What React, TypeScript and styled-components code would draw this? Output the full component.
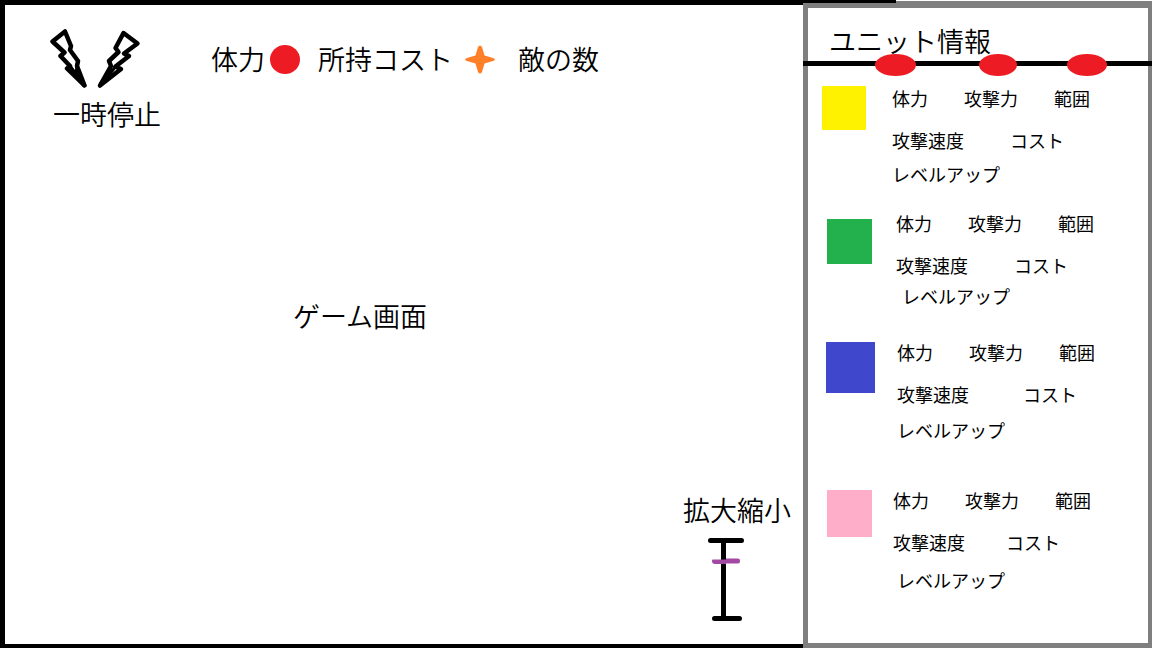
import React, { useState } from "react";
import styled, { createGlobalStyle } from "styled-components";

const GlobalStyle = createGlobalStyle`
  *, *::before, *::after { box-sizing: border-box; }
  body {
    margin: 0;
    background: #fff;
    color: #000;
    font-family: "Noto Sans CJK JP", sans-serif;
    font-weight: 350;
  }
  button {
    margin: 0;
    padding: 0;
    border: 0;
    background: none;
    color: inherit;
    font: inherit;
    cursor: pointer;
  }
`;

const Screen = styled.div`
  display: grid;
  grid-template-columns: minmax(0, 1fr) 349px;
  min-height: 100vh;
`;

const Game = styled.main`
  display: flex;
  flex-direction: column;
  border: solid #000;
  border-width: 5px 0 4px 5px;
`;

const Hud = styled.header`
  display: flex;
  align-items: flex-start;
  gap: 50px;
  padding: 24px 0 0 45px;
`;

const LargeText = styled.span`
  font-size: 27px;
  line-height: 36px;
  white-space: nowrap;
`;

const PauseButton = styled.button`
  display: flex;
  flex-direction: column;
  align-items: flex-start;
  gap: 7px;

  svg { display: block; }
  span { padding-left: 3px; }
`;

const Stats = styled.div`
  display: flex;
  align-items: center;
  padding-top: 12px;

  svg { display: block; flex: none; }
`;

const Stat = styled.div<{ $gap: number; $after?: number }>`
  display: flex;
  align-items: center;
  gap: ${(p) => p.$gap}px;
  margin-right: ${(p) => p.$after ?? 0}px;
`;

const Stage = styled.section`
  flex: 1;
  display: flex;
  align-items: center;
  justify-content: center;
  padding: 8px 88px 0 0;
`;

const ZoomControl = styled.label`
  align-self: flex-end;
  display: flex;
  flex-direction: column;
  align-items: center;
  gap: 10px;
  padding: 0 12px 23px 0;
`;

const ZoomTrack = styled.span`
  position: relative;
  display: block;
  margin-right: 22px;

  svg { display: block; }
`;

const ZoomInput = styled.input`
  position: absolute;
  inset: 5px 0;
  width: 36px;
  height: 73px;
  margin: 0;
  appearance: none;
  background: transparent;
  writing-mode: vertical-lr;
  direction: rtl;

  &::-webkit-slider-runnable-track {
    width: 36px;
    background: transparent;
  }

  &::-webkit-slider-thumb {
    appearance: none;
    width: 28px;
    height: 6px;
    margin-left: 4px;
    border-radius: 3px;
    background: #a349a4;
    clip-path: polygon(0 1px, 14px 1px, 14px 0, 100% 0, 100% 5px, 14px 5px, 14px 100%, 0 100%);
  }
`;

const Panel = styled.aside`
  display: flex;
  flex-direction: column;
  border: solid #7f7f7f;
  border-width: 0 4px 5px 5px;
`;

const PanelEdge = styled.div`
  display: flex;
  height: 8px;
  margin: 0 -4px 0 -5px;

  &::before {
    content: "";
    width: 93px;
    border-top: 3px solid #000;
    background: #7f7f7f;
  }

  &::after {
    content: "";
    flex: 1;
    border-top: 1px solid #fff;
    background: #7f7f7f;
  }
`;

const PanelTitle = styled.h2`
  margin: 0;
  padding: 15px 0 0 21px;
  font-size: 27px;
  font-weight: inherit;
  line-height: 36px;
`;

const TabBar = styled.nav`
  display: flex;
  height: 22px;
  margin: -5px -4px 0 -5px;
  padding-left: 72px;
  background: linear-gradient(#000, #000) 0 7px / 100% 5px no-repeat;
`;

const Tab = styled.button<{ $width: number; $after: number }>`
  width: ${(p) => p.$width}px;
  height: 22px;
  margin-right: ${(p) => p.$after}px;
  border-radius: 50%;
  background: #ed1c24;
`;

const UnitList = styled.ul`
  margin: 0;
  padding: 10px 0 0;
  list-style: none;
`;

interface UnitLayout {
  $indent: number;
  $gap: number;
  $after: number;
}

const UnitItem = styled.li<UnitLayout>`
  display: flex;
  align-items: flex-start;
  gap: ${(p) => p.$gap}px;
  padding-left: ${(p) => p.$indent}px;
  margin-bottom: ${(p) => p.$after}px;
`;

const Swatch = styled.div<{ $color: string; $width: number; $height: number; $drop: number }>`
  flex: none;
  width: ${(p) => p.$width}px;
  height: ${(p) => p.$height}px;
  margin-top: ${(p) => p.$drop}px;
  background: ${(p) => p.$color};
`;

const UnitInfo = styled.div`
  font-size: 18px;
  font-weight: 400;
  line-height: 24px;
  white-space: nowrap;
`;

const StatRow = styled.div<{ $gap: number }>`
  display: flex;
  gap: ${(p) => p.$gap}px;
  margin-bottom: 18px;
`;

const CostRow = styled(StatRow)<{ $after: number }>`
  margin-bottom: ${(p) => p.$after}px;
`;

const LevelUp = styled.button<{ $indent: number }>`
  display: block;
  margin-left: ${(p) => p.$indent}px;
`;

const units = [
  { color: "#fff200", w: 44, h: 44, drop: 0, indent: 14, gap: 26, cost: 46, level: 10, levelIndent: 0, after: 25 },
  { color: "#22b14c", w: 45, h: 45, drop: 8, indent: 19, gap: 24, cost: 46, level: 7, levelIndent: 6, after: 32 },
  { color: "#3f48cc", w: 49, h: 51, drop: 2, indent: 18, gap: 22, cost: 54, level: 12, levelIndent: 0, after: 46 },
  { color: "#ffaec9", w: 45, h: 47, drop: 2, indent: 19, gap: 21, cost: 41, level: 14, levelIndent: 4, after: 0 },
];

const tabs = [
  { name: "タブ1", width: 41, after: 63 },
  { name: "タブ2", width: 38, after: 50 },
  { name: "タブ3", width: 40, after: 0 },
];

function BoltsIcon() {
  return (
    <svg width="92" height="60" viewBox="50 29 92 60" fill="none" stroke="#000" strokeWidth="4.500" strokeLinejoin="round" strokeLinecap="round" aria-hidden="true">
      <path d="M52.500 41.500 65 31.500 71 46 70 50 78 61 77 66 84.500 85.500 67 68.500 70 66 60.500 56 64.500 52.500Z" />
      <path d="M70 66 76 74 77 66" strokeWidth="3" />
      <path d="M76 74 84 85" />
      <path d="M123.500 33 137.500 43.500 124 53.500 129 56 115.500 66.500 121 69 100 85.500 111 66 109 61 118.500 52 115.500 48Z" />
      <path d="M111 66 109 75 116 66" strokeWidth="3" />
      <path d="M109 75 101 84" />
    </svg>
  );
}

export default function App() {
  const [zoom, setZoom] = useState(77);

  return (
    <>
      <GlobalStyle />
      <Screen>
        <Game>
          <Hud>
            <PauseButton type="button">
              <BoltsIcon />
              <LargeText>一時停止</LargeText>
            </PauseButton>
            <Stats>
              <Stat $gap={5} $after={18}>
                <LargeText>体力</LargeText>
                <svg width="30" height="30" viewBox="0 0 30 30" aria-hidden="true">
                  <ellipse cx="15" cy="15.500" rx="15" ry="14.500" fill="#ed1c24" />
                </svg>
              </Stat>
              <Stat $gap={12} $after={23}>
                <LargeText>所持コスト</LargeText>
                <svg width="30" height="30" viewBox="0 0 30 30" aria-hidden="true">
                  <path d="M13 3Q15 0 17 3L19.500 11.500 28 14Q32 15.500 28 17L19.500 19.500 17 28Q15 31 13 28L10.500 19.500 2 17Q-2 15.500 2 14L10.500 11.500Z" fill="#ff7f27" />
                </svg>
              </Stat>
              <LargeText>敵の数</LargeText>
            </Stats>
          </Hud>
          <Stage>
            <LargeText>ゲーム画面</LargeText>
          </Stage>
          <ZoomControl>
            <LargeText>拡大縮小</LargeText>
            <ZoomTrack>
              <svg width="36" height="83" viewBox="0 0 36 83" fill="none" stroke="#000" strokeWidth="5" strokeLinecap="round" aria-hidden="true">
                <path d="M2.500 2.500H33.500M15.500 2.500V80.500M6.500 80.500H31.500" />
              </svg>
              <ZoomInput type="range" min={0} max={100} value={zoom} onChange={(e) => setZoom(Number(e.target.value))} />
            </ZoomTrack>
          </ZoomControl>
        </Game>
        <Panel>
          <PanelEdge />
          <PanelTitle>ユニット情報</PanelTitle>
          <TabBar>
            {tabs.map((t) => (
              <Tab key={t.name} type="button" aria-label={t.name} $width={t.width} $after={t.after} />
            ))}
          </TabBar>
          <UnitList>
            {units.map((u) => (
              <UnitItem key={u.color} $indent={u.indent} $gap={u.gap} $after={u.after}>
                <Swatch $color={u.color} $width={u.w} $height={u.h} $drop={u.drop} />
                <UnitInfo>
                  <StatRow $gap={36}>
                    <span>体力</span>
                    <span>攻撃力</span>
                    <span>範囲</span>
                  </StatRow>
                  <CostRow $gap={u.cost} $after={u.level}>
                    <span>攻撃速度</span>
                    <span>コスト</span>
                  </CostRow>
                  <LevelUp type="button" $indent={u.levelIndent}>レベルアップ</LevelUp>
                </UnitInfo>
              </UnitItem>
            ))}
          </UnitList>
        </Panel>
      </Screen>
    </>
  );
}
